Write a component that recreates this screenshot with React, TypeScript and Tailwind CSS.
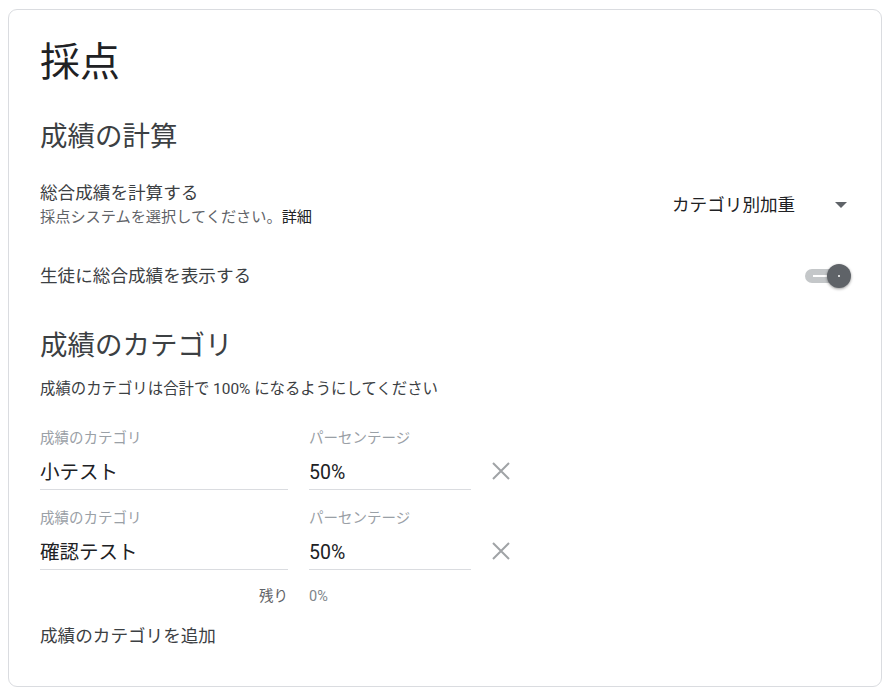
import React from "react";

const font = { fontFamily: "Roboto, 'Noto Sans CJK JP', 'Noto Sans', sans-serif" };

function CloseIcon() {
  return (
    <svg width="20" height="20" viewBox="0 0 20 20" className="text-[#a0a3a6]">
      <path d="M2 2 L18 18 M18 2 L2 18" stroke="currentColor" strokeWidth="2" fill="none" />
    </svg>
  );
}

function Field({ label, value, width }: { label: string; value: string; width: string }) {
  return (
    <div className={`flex flex-col ${width}`}>
      <div className="text-[14.5px] leading-[20px] text-[#9aa0a6]">{label}</div>
      <div className="mt-[10px] border-b border-[#dadce0] pb-[2px] text-[19.5px] leading-[28px] text-[#202124]">
        {value}
      </div>
    </div>
  );
}

function Row({ name, pct, first }: { name: string; pct: string; first?: boolean }) {
  return (
    <div className={`flex items-start ${first ? "mt-[29px]" : "mt-[19px]"}`}>
      <Field label="成績のカテゴリ" value={name} width="w-[248px]" />
      <div className="ml-[21px]">
        <Field label="パーセンテージ" value={pct} width="w-[162px]" />
      </div>
      <div className="ml-[20px] mt-[32px] flex h-[20px] w-[20px] items-center justify-center">
        <CloseIcon />
      </div>
    </div>
  );
}

export default function App() {
  return (
    <div className="min-h-[700px] bg-white pl-[8px] pt-[9px]" style={font}>
      <div className="w-[874px] rounded-[9px] border border-[#dadce0] px-[31px] pb-[38px] pt-[29px]">
        <h1 className="text-[40px] leading-[48px] font-normal text-[#202124]">採点</h1>

        <h2 className="mt-[32px] text-[27.5px] leading-[36px] font-normal text-[#3c4043]">成績の計算</h2>

        <div className="mt-[26px] flex items-center justify-between">
          <div>
            <div className="text-[17.6px] leading-[24px] text-[#3c4043]">総合成績を計算する</div>
            <div className="mt-[1px] text-[15.2px] leading-[22px] text-[#5f6368]">
              採点システムを選択してください。<span className="text-[#202124]">詳細</span>
            </div>
          </div>
          <div className="flex w-[178px] items-center justify-between">
            <span className="text-[17.6px] leading-[24px] text-[#202124]">カテゴリ別加重</span>
            <svg width="12" height="6" viewBox="0 0 12 6" className="mr-[3px]">
              <path d="M0 0 L12 0 L6 6 Z" fill="#5f6368" />
            </svg>
          </div>
        </div>

        <div className="mt-[36px] flex items-center justify-between">
          <div className="text-[17.6px] leading-[24px] text-[#3c4043]">生徒に総合成績を表示する</div>
          <div className="relative mr-[-1px] h-[24px] w-[46px]">
            <div className="absolute left-0 top-[5px] h-[14px] w-[36px] rounded-full bg-[#c4c7c9]">
              <div className="absolute left-[8px] top-[6px] h-[2px] w-[14px] bg-white" />
            </div>
            <div className="absolute right-0 top-0 flex h-[24px] w-[24px] items-center justify-center rounded-full bg-[#5f6368] shadow-[0_1px_3px_rgba(0,0,0,0.4)]">
              <div className="h-[2px] w-[2px] rounded-full bg-white" />
            </div>
          </div>
        </div>

        <h2 className="mt-[40px] text-[27.5px] leading-[36px] font-normal text-[#3c4043]">成績のカテゴリ</h2>
        <div className="mt-[14px] text-[15.4px] leading-[22px] text-[#3c4043]">
          成績のカテゴリは合計で 100% になるようにしてください
        </div>

        <Row name="小テスト" pct="50%" first />
        <Row name="確認テスト" pct="50%" />

        <div className="mt-[17px] flex text-[14.5px] leading-[20px]">
          <div className="w-[248px] text-right text-[#5f6368]">残り</div>
          <div className="ml-[21px] text-[#80868b]">0%</div>
        </div>

        <div className="mt-[17px] text-[17.6px] leading-[24px] text-[#3c4043]">成績のカテゴリを追加</div>
      </div>
    </div>
  );
}
